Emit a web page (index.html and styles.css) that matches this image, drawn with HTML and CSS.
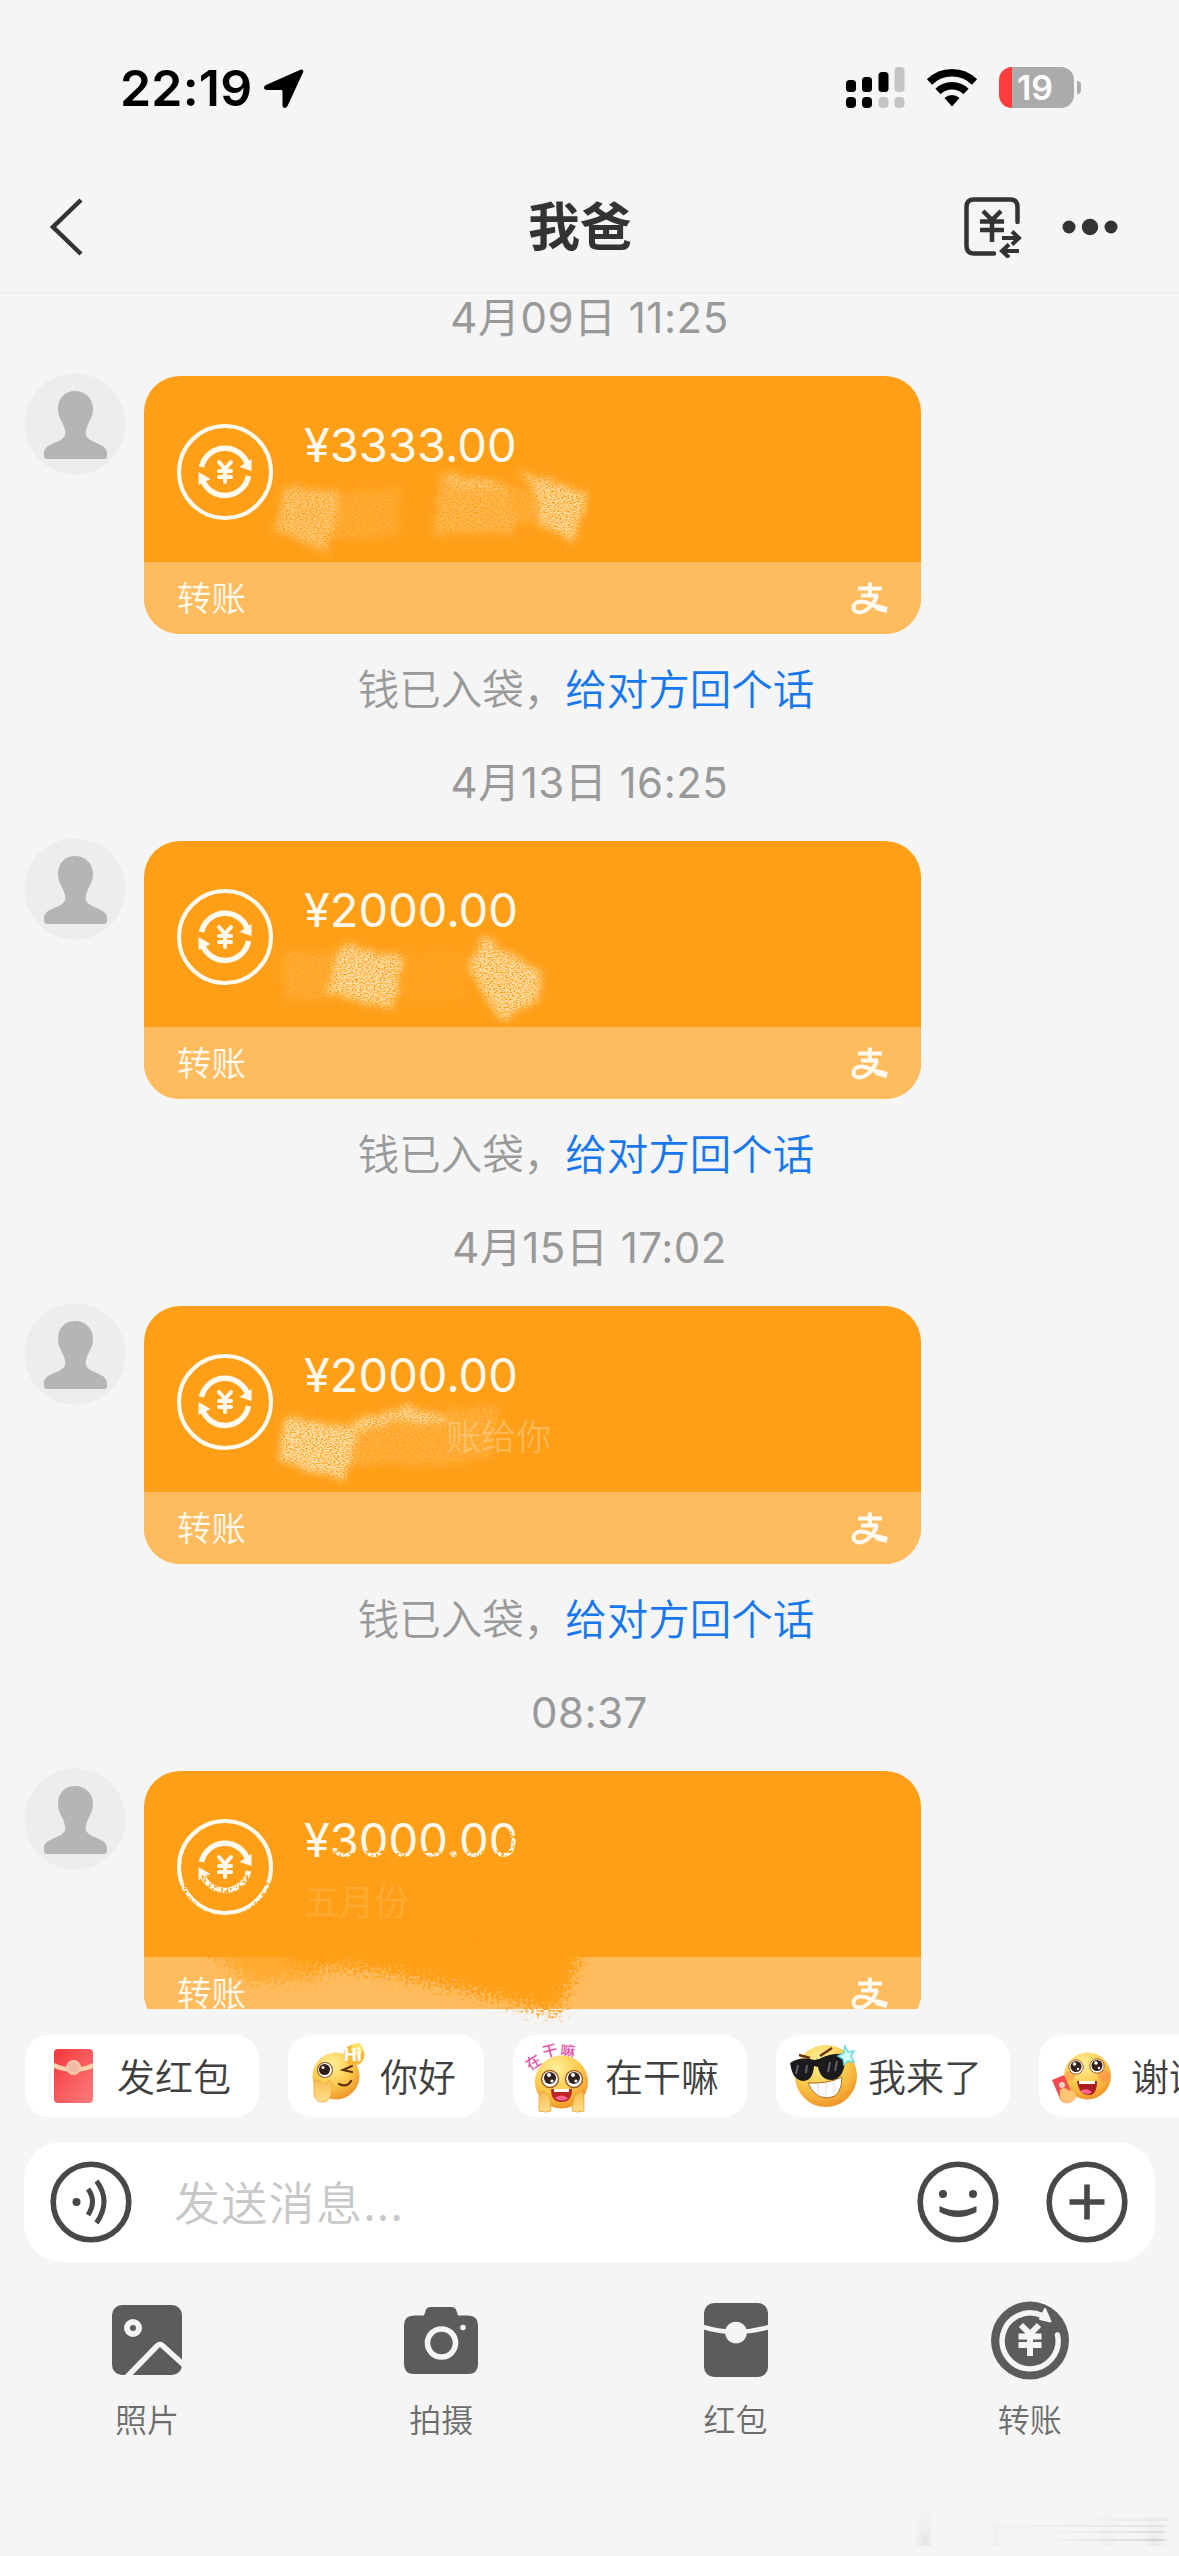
FILE: index.html
```html
<!DOCTYPE html>
<html lang="zh-CN">
<head>
<meta charset="utf-8">
<title>我爸</title>
<link rel="stylesheet" href="styles.css">
</head>
<body>
<svg class="defs" aria-hidden="true">
  <defs>
    <symbol id="person" viewBox="0 0 102 102">
      <circle cx="51" cy="51" r="50.500" fill="#ededed"/>
      <path fill="#b5b5b5" d="M51 18c-10 0-17 7-17 18 0 8 4 12 6 18 2 6 2 9-2 12-7 5-18 6-18 14v3c0 2 1 3 3 3h57c2 0 3-1 3-3v-3c0-8-11-9-18-14-4-3-4-6-2-12 2-6 6-10 6-18 0-11-8-18-18-18z"/>
    </symbol>
    <symbol id="transfer" viewBox="0 0 98 98">
      <g fill="none" stroke="#fffaf0">
        <circle cx="49" cy="49" r="46" stroke-width="4"/>
        <path stroke-width="5.500" d="M25.500 44A24 24 0 0 1 71.500 41M72.500 53A24 24 0 0 1 26.500 57"/>
        <path stroke-width="4" stroke-linecap="round" d="M43 39l6 7 6-7M49 46v13M43 48h12M43 54h12"/>
      </g>
      <path fill="#fffaf0" d="M75.500 36v12l-12-4zM22.500 62V49l12 7z"/>
    </symbol>
    <symbol id="alipay" viewBox="0 0 40 36">
      <g fill="none" stroke="#fffaf0">
        <path stroke-width="4" d="M8 7.500h24M11 14.500h17M20 1.500v13"/>
        <path stroke-width="4" d="M27 14.500c-3 9-11 17-18 17-8 0-7-11 2-11 9 0 15 7 26 9"/>
        <path stroke-width="6" d="M26 26l11 3"/>
      </g>
    </symbol>
    <radialGradient id="face" cx=".4" cy=".25" r=".8">
      <stop offset="0" stop-color="#fff09a"/><stop offset=".55" stop-color="#fdcb4c"/><stop offset="1" stop-color="#ee8f26"/>
    </radialGradient>
    <linearGradient id="hand" x1="0" y1="0" x2="0" y2="1">
      <stop offset="0" stop-color="#f9bd52"/><stop offset="1" stop-color="#ffdf8c"/>
    </linearGradient>
    <linearGradient id="packet" x1="0" y1="0" x2="1" y2="1">
      <stop offset="0" stop-color="#f5383c"/><stop offset="1" stop-color="#fb7d7d"/>
    </linearGradient>
    <filter id="grain" x="-10%" y="-15%" width="120%" height="130%">
      <feTurbulence type="fractalNoise" baseFrequency=".07" numOctaves="3" seed="4" result="warp"/>
      <feDisplacementMap in="SourceGraphic" in2="warp" scale="12" xChannelSelector="R" yChannelSelector="G" result="shape"/>
      <feGaussianBlur in="shape" stdDeviation="3.500" result="soft"/>
      <feTurbulence type="fractalNoise" baseFrequency=".5 .8" numOctaves="2" seed="9"/>
      <feColorMatrix values="0 0 0 0 1  0 0 0 0 1  0 0 0 0 1  3.500 0 0 0 -1.050" result="noise"/>
      <feComposite in="soft" in2="noise" operator="in"/>
    </filter>
    <filter id="wear" x="-10%" y="-30%" width="120%" height="160%">
      <feTurbulence type="fractalNoise" baseFrequency=".4" numOctaves="2" seed="5"/>
      <feColorMatrix values="0 0 0 0 1  0 0 0 0 1  0 0 0 0 1  6 0 0 0 -2.900" result="noise"/>
      <feComposite in="SourceGraphic" in2="noise" operator="in"/>
    </filter>
    <filter id="spray" x="-10%" y="-20%" width="120%" height="140%">
      <feGaussianBlur in="SourceGraphic" stdDeviation="4" result="soft"/>
      <feTurbulence type="fractalNoise" baseFrequency=".35" numOctaves="2" seed="3" result="n"/>
      <feDisplacementMap in="soft" in2="n" scale="44" xChannelSelector="R" yChannelSelector="G"/>
    </filter>
  </defs>
</svg>

<div class="screen">
  <header class="status">
    <div class="status-left">
      <span class="clock">22:19</span>
      <svg class="locate" viewBox="0 0 40 40"><path d="M37 1.500 2 17c-3 1.500-2.500 5 1 5h14c1 0 1.500.5 1.500 1.500V37c0 3.500 3.500 4 5 1L39 4.500c1-2-.5-3.500-2-3z"/></svg>
    </div>
    <div class="status-right">
      <svg class="signal" viewBox="0 0 60 42"><rect y="13" width="10" height="12" rx="3.500"/><rect x="16" y="10" width="10" height="15" rx="3.500"/><rect x="32.500" y="5" width="10" height="20" rx="3.500"/><rect x="48.500" width="10" height="25" rx="3.500" fill="#c5c5c5"/><rect y="30" width="10" height="11" rx="4"/><rect x="16" y="30" width="10" height="11" rx="4"/><rect x="32.500" y="30" width="10" height="11" rx="4" fill="#c5c5c5"/><rect x="48.500" y="30" width="10" height="11" rx="4" fill="#c5c5c5"/></svg>
      <svg class="wifi" viewBox="0 0 52 40"><g fill="none" stroke="#000" stroke-width="7.500"><path d="M3.500 14a32 32 0 0 1 45 0"/><path d="M12 23.500a20 20 0 0 1 28 0"/></g><path d="M18.500 30a11 11 0 0 1 15 0L26 38.500z"/></svg>
      <div class="battery"><span>19</span></div>
    </div>
  </header>

  <nav class="nav">
    <svg class="back" viewBox="0 0 36 58"><path d="M33 2 5 29l28 27" fill="none" stroke="#333" stroke-width="4.500"/></svg>
    <h1>我爸</h1>
    <div class="nav-actions">
      <svg class="bill" viewBox="0 0 58 62"><g fill="none" stroke="#333" stroke-width="4.500"><path stroke-linecap="round" d="M53.500 26V11q0-7.500-7.500-7.500H10Q2.500 3.500 2.500 11v39q0 7.500 7.500 7.500h20"/><path d="M19 15l9 9 9-9M28 24v22M16 25.500h24M16 34h24"/><path stroke-width="4" d="M38 42h16M48 35.500l7 6.500-7 6.500M55 55H39M45 48.500 38 55l7 6.500"/></g></svg>
      <svg class="more" viewBox="0 0 56 20"><g fill="#333"><circle cx="7" cy="10" r="6.500"/><circle cx="28" cy="10" r="8.200"/><circle cx="49" cy="10" r="6.500"/></g></svg>
    </div>
  </nav>

  <div class="chat-wrap">
    <main class="chat">
      <section class="message">
        <time>4月09日 11:25</time>
        <div class="row">
          <svg class="avatar"><use href="#person"/></svg>
          <article class="card">
            <div class="card-main">
              <svg class="card-icon"><use href="#transfer"/></svg>
              <div class="amount">¥3333.00</div>
              <svg class="smudge" viewBox="0 0 777 258">
                <g filter="url(#grain)" fill="#ffdca0">
                  <path opacity=".7" d="M142 112 196 114 182 176 130 154z"/>
                  <path opacity=".25" d="M190 118 256 112 252 160 182 166z"/>
                  <path opacity=".45" d="M296 98 364 106 370 156 288 160z"/>
                  <path opacity=".7" d="M302 98 364 106 362 114 304 108z"/>
                  <path opacity=".3" d="M364 112 390 112 396 146 366 148z"/>
                  <path d="M374 94 444 118 430 164 394 148 392 118z"/>
                </g>
              </svg>
            </div>
            <footer><span>转账</span><svg class="pay"><use href="#alipay"/></svg></footer>
          </article>
        </div>
        <p class="hint">钱已入袋，<a>给对方回个话</a></p>
      </section>

      <section class="message">
        <time>4月13日 16:25</time>
        <div class="row">
          <svg class="avatar"><use href="#person"/></svg>
          <article class="card">
            <div class="card-main">
              <svg class="card-icon"><use href="#transfer"/></svg>
              <div class="amount">¥2000.00</div>
              <svg class="smudge" viewBox="0 0 777 258">
                <g filter="url(#grain)" fill="#ffe3b0">
                  <path opacity=".22" d="M140 112H196V158H140z"/>
                  <path opacity=".08" d="M256 112H326V158H256z"/>
                  <path opacity=".9" d="M198 104 260 116 248 168 182 152z"/>
                  <path opacity=".6" d="M192 110 256 118 248 162 186 150z"/>
                  <path opacity=".9" d="M340 94 398 132 394 158 356 180 324 126z"/>
                  <path opacity=".6" d="M342 102 392 132 386 158 356 170 330 130z"/>
                </g>
              </svg>
            </div>
            <footer><span>转账</span><svg class="pay"><use href="#alipay"/></svg></footer>
          </article>
        </div>
        <p class="hint">钱已入袋，<a>给对方回个话</a></p>
      </section>

      <section class="message">
        <time>4月15日 17:02</time>
        <div class="row">
          <svg class="avatar"><use href="#person"/></svg>
          <article class="card">
            <div class="card-main">
              <svg class="card-icon"><use href="#transfer"/></svg>
              <div class="amount">¥2000.00</div>
              <div class="note note-end">账给你</div>
              <svg class="smudge" viewBox="0 0 777 258">
                <g filter="url(#grain)" fill="#ffe3b0">
                  <path d="M142 112 208 120 210 154 200 174 134 154z"/>
                  <path opacity=".4" d="M142 114 212 118 200 168 136 154z"/>
                  <path opacity=".9" d="M206 116 262 100 304 112 296 120 254 114 218 126z"/>
                  <path opacity=".28" d="M206 116 270 108 356 98 346 148 304 160 206 158z"/>
                </g>
              </svg>
            </div>
            <footer><span>转账</span><svg class="pay"><use href="#alipay"/></svg></footer>
          </article>
        </div>
        <p class="hint">钱已入袋，<a>给对方回个话</a></p>
      </section>

      <section class="message">
        <time>08:37</time>
        <div class="row">
          <svg class="avatar"><use href="#person"/></svg>
          <article class="card">
            <div class="card-main">
              <svg class="card-icon"><use href="#transfer"/></svg>
              <div class="amount">¥3000.00</div>
              <div class="note">五月份</div>
              <svg class="smudge" viewBox="0 0 777 258">
                <g filter="url(#wear)" fill="none" stroke="#ff9f18" stroke-width="9">
                  <path d="M36 112a46 46 0 0 0 90 0M59 104a24 24 0 0 0 45 0"/>
                  <path d="M184 84H372M370 60V86"/>
                </g>
              </svg>
            </div>
            <footer><span>转账</span><svg class="pay"><use href="#alipay"/></svg></footer>
          </article>
        </div>
      </section>
    </main>
    <svg class="spray" viewBox="0 0 440 90"><g filter="url(#spray)" fill="#ff9f18"><path opacity=".6" d="M10 -4H140V40L70 44z"/><path d="M100 -8H408L396 34 376 74 280 50 180 30 110 26z"/></g></svg>
  </div>

  <div class="chips">
    <div class="chip">
      <svg viewBox="0 0 80 82"><rect x="29" y="14" width="39" height="54" rx="4" fill="url(#packet)"/><path d="M29 28q20 9 39 0v5q-19 8-39 0z" fill="#fbd3a9"/><circle cx="48.500" cy="32.500" r="7.500" fill="#fbc4ac"/><circle cx="48.500" cy="32.500" r="4.500" fill="#f3b7a4"/></svg>
      <span>发红包</span>
    </div>
    <div class="chip">
      <svg viewBox="0 0 80 82"><circle cx="48" cy="41" r="23.500" fill="url(#face)"/><circle cx="37" cy="35" r="7.500" fill="#fff" stroke="#9b5b20" stroke-width="1.200"/><circle cx="36.500" cy="34.500" r="5.500" fill="#2f1c17"/><circle cx="35" cy="32.500" r="1.500" fill="#fff"/><path d="M64 31l-9 4 9 2M63 46q-4 7-12 3" fill="none" stroke="#5b2d13" stroke-width="2.200" stroke-linecap="round"/><path d="M26 47q0-4 4-1l9 4q-1-5 3-4 4 1 2 8-1 12-8 13-8 1-10-7z" fill="url(#hand)" stroke="#efaa40" stroke-width=".8"/><circle cx="66" cy="20" r="10.500" fill="#f9b93c"/><circle cx="69" cy="14" r="6" fill="#ffe36b"/><text x="56" y="26" class="hi">Hi</text></svg>
      <span>你好</span>
    </div>
    <div class="chip">
      <svg viewBox="0 0 80 82"><g class="tiny"><text transform="translate(17 36) rotate(-33)">在</text><text transform="translate(31 23) rotate(-14)">干</text><text transform="translate(47 21) rotate(5)">嘛</text></g><circle cx="48.500" cy="47" r="26.500" fill="url(#face)"/><g fill="#fff" stroke="#a75b22" stroke-width="1.500"><circle cx="37" cy="44" r="8.500"/><circle cx="61" cy="44" r="8.500"/></g><g fill="#35211b"><circle cx="37" cy="43" r="6"/><circle cx="61" cy="43" r="6"/></g><g fill="#fff"><circle cx="36" cy="40" r="2"/><circle cx="60" cy="40" r="2"/><circle cx="39" cy="46" r="1.600"/><circle cx="63" cy="46" r="1.600"/></g><path d="M38 54h21q0 13-10.500 13T38 54z" fill="#bd2425"/><path d="M41 54h15v3H41z" fill="#fff"/><path d="M42 63q6-5 13 0-6 5-13 0z" fill="#ff6693"/><path d="M28 57q6 0 9 6l1 13q-5 2-12 0v-13zM70 57q-6 0-9 6l-2 13q5 2 12 0v-13z" fill="url(#hand)" stroke="#eda03a" stroke-width=".8"/></svg>
      <span>在干嘛</span>
    </div>
    <div class="chip">
      <svg viewBox="0 0 84 82"><circle cx="50" cy="41" r="31" fill="url(#face)"/><path d="M23 20l11 3M44 21l12-8" fill="none" stroke="#6b3410" stroke-width="2.400"/><path d="M14 28q11-7 24-3l5-1q11-6 27-5-1 24-13 26-12 1-15-13l-4-1q-1 14-10 15-12 0-14-19z" fill="#1b1b1d"/><path d="M22 30l-2 9M31 30l-1 8M54 27l-2 10M61 26l-2 10" stroke="#606367" stroke-width="2"/><path d="M32 48q20 1 34-6 0 20-14 21-14 0-20-15z" fill="#fff" stroke="#b0671f" stroke-width="1"/><path d="M42 49v12M50 48v14M58 46v14" stroke="#e0ddda" stroke-width="1"/><path d="m69 11 3 6 6-1-3 5 3 6-6-1-4 4-1-6-5-3 6-3z" fill="#d5ffff" stroke="#68d9df" stroke-width="1.500"/></svg>
      <span>我来了</span>
    </div>
    <div class="chip">
      <svg viewBox="0 0 80 82"><circle cx="48.500" cy="41" r="23.500" fill="url(#face)"/><circle cx="31" cy="41" r="5" fill="#ff8c4a" opacity=".5"/><circle cx="65" cy="41" r="6" fill="#ff8c4a" opacity=".6"/><g fill="#fff" stroke="#a75b22"><circle cx="37" cy="32" r="7.200"/><circle cx="58" cy="31" r="7.200"/></g><g fill="#35211b"><circle cx="37" cy="31.500" r="5.500"/><circle cx="58" cy="30.500" r="5.500"/></g><g fill="#fff"><circle cx="35.500" cy="29" r="1.800"/><circle cx="57" cy="28" r="1.800"/><circle cx="39" cy="34" r="1.200"/><circle cx="60" cy="33" r="1.200"/></g><path d="M38 46h20q0 14-8 14-10 0-12-14z" fill="#a91d22"/><path d="M40 46h16v3H40z" fill="#fff"/><path d="M41 56q7-4 12 1-5 5-12-1z" fill="#ff648c"/><path d="m13 45 12-5 9 20-12 6z" fill="#f04b55"/><circle cx="23" cy="50" r="3" fill="#ffd3b1"/><path d="M21 55q4-4 8 0 8 0 8 6-2 7-10 7-6-1-6-6z" fill="#ffc575" stroke="#efa14d" stroke-width=".6"/></svg>
      <span>谢谢</span>
    </div>
  </div>

  <div class="composer">
    <svg class="round" viewBox="0 0 82 82"><g fill="none" stroke="#484848" stroke-width="5.600"><circle cx="41" cy="41" r="37.800"/><path stroke-width="5" d="M38 28q9 12 0 26M46.500 20q15 20 0 42"/></g><circle cx="26.500" cy="41" r="4" fill="#484848"/></svg>
    <span class="placeholder">发送消息...</span>
    <svg class="round" viewBox="0 0 82 82"><circle cx="41" cy="41" r="37.800" fill="none" stroke="#484848" stroke-width="5.600"/><circle cx="26" cy="33" r="4" fill="#484848"/><circle cx="56" cy="33" r="4" fill="#484848"/><path d="M22.500 45q18.500 9 37 0v6q-18.500 10-37 0z" fill="#484848"/></svg>
    <svg class="round" viewBox="0 0 82 82"><g fill="none" stroke="#484848" stroke-width="5.600"><circle cx="41" cy="41" r="37.800"/><path d="M41 23.500v35M23.500 41h35"/></g></svg>
  </div>

  <div class="tools">
    <div class="tool"><svg viewBox="0 0 80 80"><rect x="5" y="5" width="70" height="70" rx="10" fill="#5c5c5c"/><g fill="none" stroke="#f5f5f5"><circle cx="26" cy="28" r="6" stroke-width="6"/><path stroke-width="5.500" stroke-linejoin="round" d="M18 79 49.500 46.500q3.500-4 7 0L78 66"/></g></svg><span>照片</span></div>
    <div class="tool"><svg viewBox="0 0 80 80"><path fill="#5c5c5c" d="M13 15.500h10l2-6q1-2.500 4-2.500h22q3 0 4 2.500l2 6h10q10 0 10 10V64q0 10-10 10H13Q3 74 3 64V25.500q0-10 10-10z"/><circle cx="40.500" cy="43" r="14" fill="none" stroke="#f5f5f5" stroke-width="5.600"/><circle cx="62" cy="27.500" r="2.800" fill="#f5f5f5"/></svg><span>拍摄</span></div>
    <div class="tool"><svg viewBox="0 0 80 80"><rect x="8" y="3" width="64" height="74" rx="10" fill="#5c5c5c"/><path d="M7 27q33 10 66 0" fill="none" stroke="#f5f5f5" stroke-width="4.500"/><circle cx="40" cy="32.500" r="10.800" fill="#f5f5f5"/></svg><span>红包</span></div>
    <div class="tool"><svg viewBox="0 0 80 80"><circle cx="40" cy="40.500" r="39" fill="#5c5c5c"/><g fill="none" stroke="#f5f5f5" stroke-width="5.400"><path stroke-linecap="round" d="M67.500 35A28 28 0 1 1 52 15.500"/><path stroke-width="6" d="M31 25l9 9 9-9M40 34v22M28.500 36.500h23M28.500 45h23"/></g><path fill="#f5f5f5" stroke="#f5f5f5" stroke-width="2" stroke-linejoin="round" d="m55 9 5.500 12.500L50 19z"/></svg><span>转账</span></div>
  </div>
  <div class="watermark"></div>
</div>
</body>
</html>
```
FILE: styles.css
```css
* { box-sizing: border-box; }

body {
  margin: 0;
  background: #f5f5f5;
  font-family: Inter, "Noto Sans CJK SC", sans-serif;
  color: #333;
}

svg { display: block; flex: none; }

.defs { position: absolute; width: 0; height: 0; }

.screen {
  position: relative;
  width: 1179px;
  height: 2556px;
  overflow: hidden;
  display: flex;
  flex-direction: column;
}

/* Status bar */
.status {
  height: 175px;
  padding: 0 97px 0 120px;
  display: flex;
  align-items: center;
  justify-content: space-between;
  color: #000;
}

.status-left, .status-right { display: flex; align-items: center; }
.clock { font-size: 50px; font-weight: 600; letter-spacing: .2px; line-height: 60px; }
.status-left { gap: 12px; }
.locate { width: 40px; height: 40px; }
.signal { width: 60px; height: 42px; margin-right: 20px; }
.wifi { width: 52px; height: 40px; margin-right: 21px; }

.battery {
  position: relative;
  width: 75px;
  height: 41px;
  border-radius: 13px;
  background: linear-gradient(90deg, #ff3b3b 13px, #ababab 13px);
  margin-right: 8px;
  padding-right: 3px;
  display: flex;
  align-items: center;
  justify-content: center;
  color: #fff;
  font-size: 34px;
  font-weight: 600;
}

.battery::after {
  content: "";
  position: absolute;
  right: -7px;
  top: 14px;
  width: 4px;
  height: 13px;
  border-radius: 0 5px 5px 0;
  background: #ababab;
}

/* Title bar */
.nav {
  height: 119px;
  padding: 0 61px 13px 48px;
  display: grid;
  grid-template-columns: 200px 1fr 200px;
  align-items: center;
  border-bottom: 2px solid #f0f0f0;
}

.back { width: 36px; height: 58px; }

h1 {
  margin: 2px 0 0 -6px;
  text-align: center;
  font-size: 52px;
  line-height: 60px;
  font-weight: 600;
}

.nav-actions { display: flex; align-items: center; justify-content: flex-end; gap: 40px; }
.bill { width: 58px; height: 62px; }
.more { width: 56px; height: 20px; }

/* Conversation */
.chat-wrap { position: relative; height: 1715px; flex: none; }
.chat { height: 1715px; overflow: hidden; }
.message { height: 465px; }

time {
  display: block;
  height: 82px;
  text-align: center;
  font-size: 42px;
  letter-spacing: .5px;
  line-height: 48px;
  color: #999;
}

.row { display: flex; align-items: flex-start; padding-left: 24px; gap: 18px; }
.avatar { width: 102px; height: 102px; margin-top: -3px; }

.card {
  width: 777px;
  height: 258px;
  border-radius: 36px;
  background: #ff9f18;
  overflow: hidden;
  color: #fffaf0;
}

.card-main {
  position: relative;
  height: 186px;
  padding: 47px 0 0 32px;
  display: flex;
  gap: 30px;
}

.card-icon { width: 98px; height: 98px; }
.amount { margin-top: -2px; font-size: 47px; line-height: 48px; }

.note {
  position: absolute;
  left: 160px;
  top: 106px;
  font-size: 35px;
  font-weight: 350;
  line-height: 50px;
  opacity: .13;
}

.note-end { left: 302px; opacity: .28; }

.smudge { position: absolute; left: 0; top: 0; width: 777px; height: 258px; }

.card footer {
  height: 72px;
  padding: 0 31px 4px 33px;
  display: flex;
  align-items: center;
  justify-content: space-between;
  background: #ffbc5f;
  font-size: 34.500px;
  font-weight: 350;
}

.pay { width: 40px; height: 36px; margin-top: 6px; }

.hint {
  margin: 32px 0 0;
  padding-right: 7px;
  text-align: center;
  font-size: 41.500px;
  font-weight: 350;
  line-height: 48px;
  color: #999;
}

.hint a { color: #1677ee; }

.spray { position: absolute; left: 180px; top: 1645px; width: 440px; height: 90px; }

/* Quick replies */
.chips {
  margin-top: 26px;
  padding-left: 25px;
  display: flex;
  gap: 29px;
  flex: none;
}

.chip {
  flex: none;
  height: 82px;
  padding-right: 28px;
  border-radius: 24px;
  background: #fff;
  display: flex;
  align-items: center;
  font-size: 38px;
  font-weight: 350;
  line-height: 50px;
  color: #404040;
}

.chip span { margin-top: 2px; }
.chip svg { width: 80px; height: 82px; margin-right: 12px; }
.chip:nth-child(4) svg { width: 84px; margin-right: 8px; }
.hi { font: 800 17px Inter, sans-serif; fill: #fff; }
.tiny { font: 500 15px "Noto Sans CJK SC", sans-serif; fill: #e64fa9; }

/* Message input */
.composer {
  margin: 25px 24px 0;
  height: 120px;
  flex: none;
  padding: 0 27px 0 26px;
  border-radius: 38px;
  background: #fff;
  display: flex;
  align-items: center;
}

.round { width: 82px; height: 82px; }
.round:last-child { margin-left: 47px; }

.placeholder {
  flex: 1;
  padding: 0 0 5px 42px;
  font-family: "Noto Sans CJK SC", sans-serif;
  font-size: 46px;
  font-weight: 350;
  letter-spacing: 1.300px;
  line-height: 60px;
  color: #c8c8c8;
}

/* Attachment actions */
.tools { width: 1177px; margin-top: 38px; display: grid; grid-template-columns: repeat(4, 1fr); }
.tool { display: flex; flex-direction: column; align-items: center; gap: 20px; font-size: 32px; font-weight: 350; line-height: 42px; color: #6d6d6d; }
.tool svg { width: 80px; height: 80px; }

.watermark {
  position: absolute;
  left: 915px;
  top: 2508px;
  width: 254px;
  height: 38px;
  opacity: .6;
  background:
    linear-gradient(90deg, transparent 60%, #8888 99%, transparent) 0 10px / 100% 3px no-repeat,
    linear-gradient(90deg, transparent 20%, #8888 97%, transparent) 0 17px / 100% 2px no-repeat,
    linear-gradient(90deg, transparent 50%, #8888 97%, transparent) 0 23px / 100% 2px no-repeat,
    linear-gradient(90deg, transparent 50%, #8888 97%, transparent) 0 31px / 100% 2px no-repeat,
    linear-gradient(90deg, transparent 0, #cccccc99 3%, #cccccc99 5%, transparent 7%, transparent 30%, #dddddd88 32%, transparent 34%, transparent 72%, #dddddd88 75%, transparent 80%, transparent 90%, #cccccc88 94%, transparent);
  -webkit-mask-image: linear-gradient(transparent, #000);
  mask-image: linear-gradient(transparent, #000);
}
```
